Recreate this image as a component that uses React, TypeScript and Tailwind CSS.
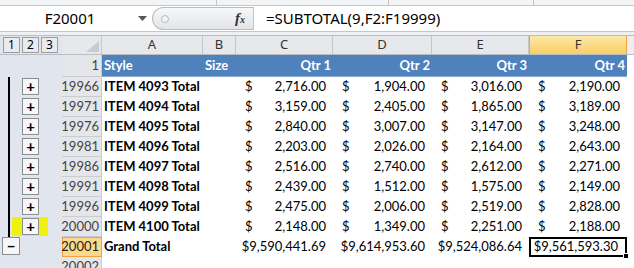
import React from "react";

type Row = {
  num: string;
  label: string;
  vals: string[];
};

const rows: Row[] = [
  { num: "19966", label: "ITEM 4093 Total", vals: ["2,716.00", "1,904.00", "3,016.00", "2,190.00"] },
  { num: "19971", label: "ITEM 4094 Total", vals: ["3,159.00", "2,405.00", "1,865.00", "3,189.00"] },
  { num: "19976", label: "ITEM 4095 Total", vals: ["2,840.00", "3,007.00", "3,147.00", "3,248.00"] },
  { num: "19981", label: "ITEM 4096 Total", vals: ["2,203.00", "2,026.00", "2,164.00", "2,643.00"] },
  { num: "19986", label: "ITEM 4097 Total", vals: ["2,516.00", "2,740.00", "2,612.00", "2,271.00"] },
  { num: "19991", label: "ITEM 4098 Total", vals: ["2,439.00", "1,512.00", "1,575.00", "2,149.00"] },
  { num: "19996", label: "ITEM 4099 Total", vals: ["2,475.00", "2,006.00", "2,519.00", "2,828.00"] },
  { num: "20000", label: "ITEM 4100 Total", vals: ["2,148.00", "1,349.00", "2,251.00", "2,188.00"] },
];

const qtrWidths = ["w-[97px]", "w-[99px]", "w-[97px]", "w-[98px]"];

const cellFont = { fontFamily: "Lato, 'Liberation Sans', sans-serif" };
const uiFont = { fontFamily: "'Noto Sans', 'Open Sans', sans-serif" };

const PlusBox = ({ sign = "+" }: { sign?: string }) => (
  <div className="w-[17px] h-[17px] border border-[#8a8d92] bg-[#f7f7f7] flex items-center justify-center text-[15px] font-bold leading-none text-black">
    {sign}
  </div>
);

const RowHeader = ({ num, selected }: { num: string; selected?: boolean }) => (
  <div
    className={
      selected
        ? "w-[40px] h-full flex items-center justify-end pr-[2px] text-[13px] text-[#222] bg-[#fcd88b] border border-[#f0a23c]"
        : "w-[40px] h-full flex items-center justify-end pr-[2px] text-[13px] text-[#444] bg-[#e4e6ea] border-b border-r border-[#c9cdd3]"
    }
    style={cellFont}
  >
    {num}
  </div>
);

const MoneyCell = ({ w, val }: { w: string; val: string }) => (
  <div className={`${w} h-full flex items-center justify-between pl-[9px] pr-[7px] text-[13px] text-black`}>
    <span>$</span>
    <span>{val}</span>
  </div>
);

export default function App() {
  return (
    <div className="w-[634px] h-[268px] overflow-hidden bg-white flex flex-col select-none">
      {/* ribbon bottom */}
      <div className="h-[6px] shrink-0 flex bg-[#f3f4f6] border-b border-[#c3c7cd]">
        <div className="w-[217px] border-r border-[#c3c7cd]" />
        <div className="w-[172px] border-r border-[#c3c7cd]" />
        <div className="w-[145px] border-r border-[#c3c7cd]" />
      </div>

      {/* formula bar */}
      <div className="h-[26px] shrink-0 flex items-stretch bg-white border-b border-[#c3c7cd] py-[1px]">
        <div className="w-[152px] flex items-center bg-white" style={uiFont}>
          <span className="flex-1 text-center text-[15px] text-black pl-[2px]">F20001</span>
          <svg width="9" height="5" viewBox="0 0 9 5" className="mr-[5px]">
            <path d="M0 0 L9 0 L4.5 5 Z" fill="#555" />
          </svg>
        </div>
        <div className="w-[101px] flex items-center rounded-l-full border border-r-0 border-[#b9bdc3] bg-gradient-to-b from-[#f7f8f9] to-[#e2e4e7]">
          <div className="ml-[8px] w-[8px] h-[8px] rounded-full border border-[#b5b9bf] bg-[#f2f3f5]" />
          <div className="flex-1" />
          <span
            className="mr-[8px] text-[15px] italic font-bold text-[#333] leading-none"
            style={{ fontFamily: "'Liberation Serif', serif" }}
          >
            f<span className="text-[10px]">x</span>
          </span>
        </div>
        <div
          className="flex-1 flex items-center pl-[12px] text-[15px] text-black bg-white border-l border-[#c3c7cd]"
          style={uiFont}
        >
          =SUBTOTAL(9,F2:F19999)
        </div>
      </div>

      <div className="h-[3px] shrink-0 bg-[#eef0f3]" />

      {/* column headers */}
      <div className="h-[20px] shrink-0 flex border-t border-b border-[#b9bdc4] text-[13px] text-[#333]" style={uiFont}>
        <div className="w-[62px] h-full flex items-center gap-[2px] pl-[3px] bg-[#e1e5ee]">
          {["1", "2", "3"].map((n) => (
            <div
              key={n}
              className="w-[17px] h-[16px] flex items-center justify-center border border-[#9a9ea4] bg-[#e9ebee] text-[12px] text-black"
            >
              {n}
            </div>
          ))}
        </div>
        <div className="w-[40px] h-full flex items-end justify-end pr-[2px] pb-[2px] bg-[#e6e8eb] border-r border-[#c3c7cd]">
          <svg width="13" height="11" viewBox="0 0 13 11">
            <path d="M13 0 L13 11 L0 11 Z" fill="#c8ccd1" />
          </svg>
        </div>
        {[
          ["A", "w-[101px]"],
          ["B", "w-[33px]"],
          ["C", "w-[97px]"],
          ["D", "w-[99px]"],
          ["E", "w-[97px]"],
        ].map(([l, w]) => (
          <div key={l} className={`${w} h-full flex items-center justify-center bg-[#e6e8eb] border-r border-[#c3c7cd]`}>
            {l}
          </div>
        ))}
        <div className="w-[98px] h-full flex items-center justify-center bg-gradient-to-b from-[#fde8a6] to-[#f8cd64] border-x border-[#eda443]">
          F
        </div>
        <div className="flex-1 bg-[#eceef1]" />
      </div>

      {/* row 1 */}
      <div className="h-[22px] shrink-0 flex" style={cellFont}>
        <div className="w-[62px] h-full bg-[#e1e5ee]" />
        <RowHeader num="1" />
        <div className="w-[525px] h-full flex bg-[#4f81bd] text-white font-bold text-[13px] border-b border-[#8faad0]">
          <div className="w-[101px] flex items-center pl-[2px]">Style</div>
          <div className="w-[33px] flex items-center pl-[2px]">Size</div>
          {["Qtr 1", "Qtr 2", "Qtr 3", "Qtr 4"].map((q, i) => (
            <div key={q} className={`${qtrWidths[i]} flex items-center justify-end pr-[2px]`}>
              {q}
            </div>
          ))}
        </div>
        <div className="flex-1" />
      </div>

      {/* data rows */}
      {rows.map((r, i) => {
        const last = i === rows.length - 1;
        return (
          <div key={r.num} className="h-[20px] shrink-0 flex" style={cellFont}>
            <div className="w-[62px] h-full flex items-start bg-[#e1e5ee]">
              <div className="ml-[8px] w-[2px] h-full bg-black" />
              {last ? (
                <div className="ml-[2px] w-[36px] h-[19px] bg-[#eef20c] pl-[10px] pt-[1px]">
                  <PlusBox />
                </div>
              ) : (
                <div className="ml-[12px] mt-[1px]">
                  <PlusBox />
                </div>
              )}
            </div>
            <RowHeader num={r.num} />
            <div className="w-[101px] h-full flex items-center pl-[2px] font-bold text-[13px] text-black whitespace-nowrap">
              {r.label}
            </div>
            <div className="w-[33px]" />
            {r.vals.map((v, j) => (
              <MoneyCell key={j} w={qtrWidths[j]} val={v} />
            ))}
          </div>
        );
      })}

      {/* grand total */}
      <div className="h-[20px] shrink-0 flex" style={cellFont}>
        <div className="w-[62px] h-full flex items-start bg-[#e1e5ee]">
          <div className="ml-[2px] w-[18px] h-[18px] border border-[#8a8d92] bg-[#f7f7f7] flex items-center justify-center text-[15px] font-bold leading-none text-black">
            −
          </div>
        </div>
        <RowHeader num="20001" selected />
        <div className="w-[101px] h-full flex items-center pl-[2px] font-bold text-[13px] text-black">Grand Total</div>
        <div className="w-[33px]" />
        {["$9,590,441.69", "$9,614,953.60", "$9,524,086.64"].map((v, j) => (
          <div key={v} className={`${qtrWidths[j]} h-full flex items-center justify-end pr-[7px] text-[13px] text-black`}>
            {v}
          </div>
        ))}
        <div className="relative w-[98px] h-full flex items-center justify-end pr-[7px] text-[13px] text-black border-2 border-black">
          $9,561,593.30
          <div className="absolute right-[-4px] bottom-[-4px] w-[6px] h-[6px] bg-black border border-white" />
        </div>
      </div>

      {/* row 20002 */}
      <div className="h-[20px] shrink-0 flex" style={cellFont}>
        <div className="w-[62px] h-full bg-[#e1e5ee]" />
        <RowHeader num="20002" />
        <div className="flex-1" />
      </div>
    </div>
  );
}
